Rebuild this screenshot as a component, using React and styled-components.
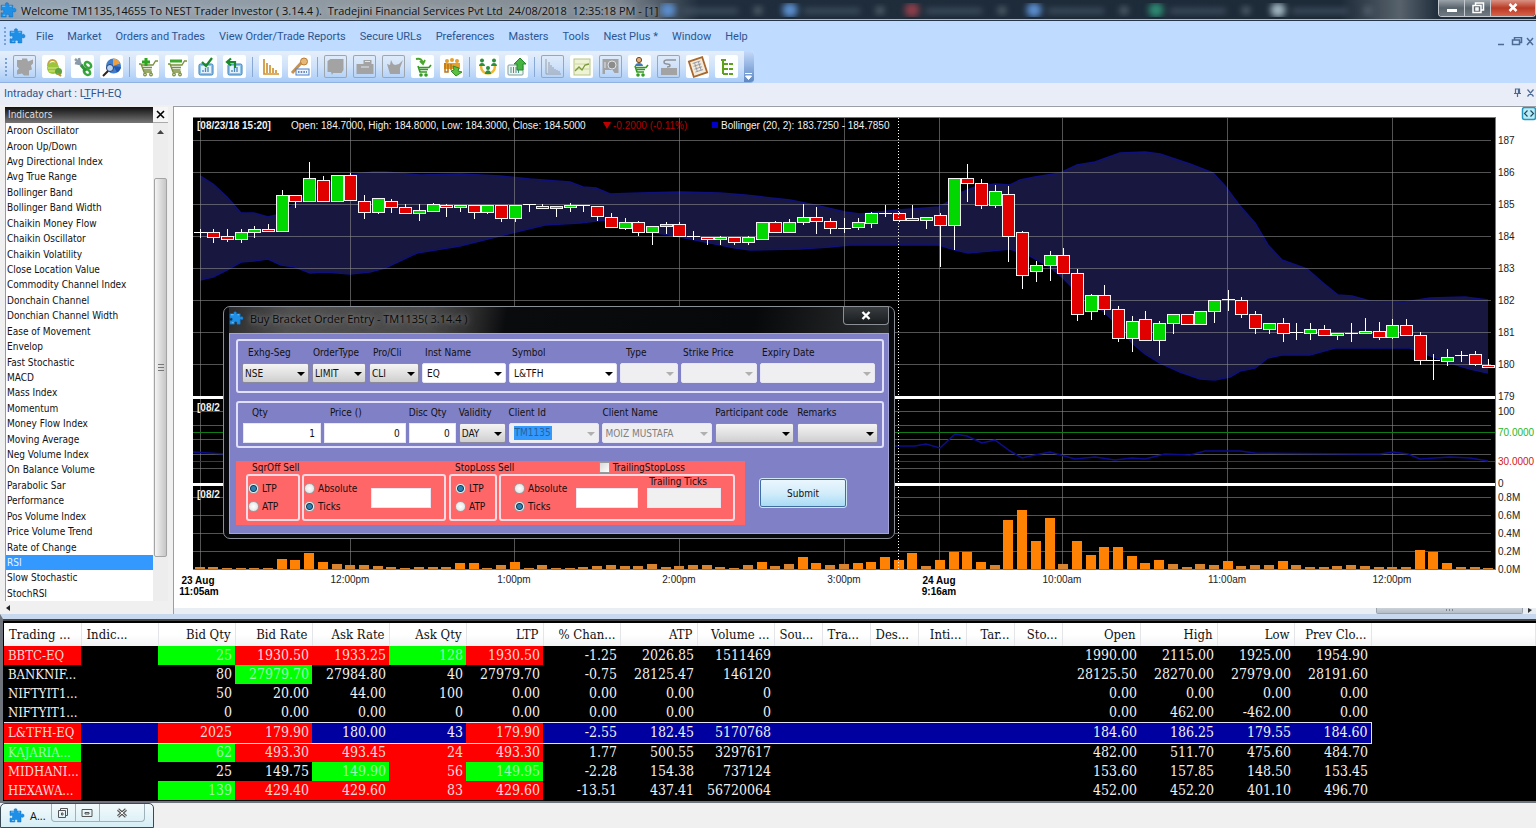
import React from "react";
import styled, { createGlobalStyle, css } from "styled-components";

const APP_TITLE =
  "Welcome TM1135,14655 To NEST Trader Investor ( 3.14.4 ).  Tradejini Financial Services Pvt Ltd  24/08/2018  12:35:18 PM - [1]";

const MENUS = [
  "File",
  "Market",
  "Orders and Trades",
  "View Order/Trade Reports",
  "Secure URLs",
  "Preferences",
  "Masters",
  "Tools",
  "Nest Plus *",
  "Window",
  "Help",
];

const INDICATORS = [
  "Aroon Oscillator",
  "Aroon Up/Down",
  "Avg Directional Index",
  "Avg True Range",
  "Bollinger Band",
  "Bollinger Band Width",
  "Chaikin Money Flow",
  "Chaikin Oscillator",
  "Chaikin Volatility",
  "Close Location Value",
  "Commodity Channel Index",
  "Donchain Channel",
  "Donchian Channel Width",
  "Ease of Movement",
  "Envelop",
  "Fast Stochastic",
  "MACD",
  "Mass Index",
  "Momentum",
  "Money Flow Index",
  "Moving Average",
  "Neg Volume Index",
  "On Balance Volume",
  "Parabolic Sar",
  "Performance",
  "Pos Volume Index",
  "Price Volume Trend",
  "Rate of Change",
  "RSI",
  "Slow Stochastic",
  "StochRSI",
];

// kind, body top, body bottom, wick top, wick bottom
const CANDLES = [
  ["d", 232, 233, 229, 237], ["r", 232, 237, 229, 242], ["r", 236, 239, 229, 241],
  ["g", 232, 239, 229, 242], ["g", 229, 232, 226, 237], ["r", 229, 231, 224, 231],
  ["g", 195, 231, 190, 231], ["r", 195, 201, 195, 207], ["g", 178, 201, 162, 201],
  ["r", 180, 201, 176, 201], ["g", 175, 201, 175, 201], ["r", 175, 200, 173, 200],
  ["r", 201, 212, 195, 218], ["g", 198, 212, 198, 213], ["r", 201, 207, 199, 212],
  ["r", 207, 213, 204, 213], ["g", 210, 213, 204, 220], ["g", 204, 211, 203, 211],
  ["r", 205, 207, 204, 216], ["g", 205, 207, 205, 211], ["r", 205, 212, 205, 218],
  ["g", 205, 212, 205, 213], ["r", 205, 218, 205, 221], ["g", 205, 218, 205, 221],
  ["d", 204, 205, 204, 211], ["r", 206, 208, 204, 208], ["g", 206, 208, 206, 216],
  ["g", 205, 207, 203, 211], ["d", 205, 206, 205, 211], ["r", 206, 216, 206, 220],
  ["r", 217, 227, 213, 227], ["g", 222, 228, 218, 229], ["r", 222, 232, 221, 235],
  ["g", 226, 232, 226, 244], ["g", 224, 226, 222, 233], ["r", 224, 236, 222, 236],
  ["d", 236, 237, 231, 239], ["r", 237, 239, 237, 244], ["g", 237, 239, 236, 244],
  ["r", 237, 242, 237, 244], ["g", 237, 242, 236, 244], ["g", 222, 239, 222, 239],
  ["r", 222, 232, 221, 232], ["g", 222, 232, 219, 232], ["g", 217, 222, 204, 224],
  ["r", 217, 221, 207, 233], ["r", 221, 228, 218, 233], ["d", 228, 230, 218, 232],
  ["g", 222, 227, 218, 229], ["g", 213, 223, 212, 227], ["d", 213, 214, 205, 216],
  ["r", 213, 220, 212, 221], ["r", 218, 220, 205, 220], ["g", 217, 220, 217, 228],
  ["r", 215, 225, 213, 266], ["g", 178, 225, 178, 249], ["r", 178, 183, 164, 201],
  ["r", 183, 205, 179, 208], ["g", 191, 205, 185, 207], ["r", 194, 236, 186, 261],
  ["r", 232, 275, 231, 288], ["g", 265, 271, 261, 281], ["g", 255, 265, 251, 280],
  ["r", 255, 273, 248, 273], ["r", 273, 314, 269, 320], ["g", 295, 311, 294, 319],
  ["r", 295, 309, 285, 314], ["r", 309, 338, 306, 341], ["g", 321, 338, 316, 351],
  ["r", 319, 340, 311, 340], ["g", 323, 340, 321, 355], ["g", 314, 323, 314, 333],
  ["r", 314, 324, 314, 324], ["g", 311, 324, 311, 324], ["g", 300, 311, 300, 322],
  ["d", 299, 300, 290, 310], ["r", 300, 314, 297, 317], ["r", 314, 328, 311, 333],
  ["g", 323, 329, 323, 333], ["r", 323, 333, 318, 341], ["d", 332, 333, 323, 339],
  ["g", 329, 333, 323, 339], ["r", 329, 335, 325, 335], ["g", 333, 335, 333, 339],
  ["d", 333, 334, 323, 341], ["g", 331, 333, 318, 333], ["r", 331, 337, 322, 339],
  ["g", 325, 337, 319, 338], ["r", 325, 335, 319, 335], ["r", 335, 360, 332, 364],
  ["d", 360, 361, 354, 379], ["g", 357, 361, 349, 365], ["d", 355, 356, 351, 361],
  ["r", 354, 364, 351, 365], ["r", 365, 367, 359, 367],
];

const VOLUMES = [
  2, 2, 1, 1, 1, 1, 10, 9, 16, 7, 5, 4, 4, 3, 2, 1, 2, 2, 2, 6, 6, 1, 4, 7, 1,
  4, 1, 1, 2, 3, 4, 3, 3, 5, 2, 3, 4, 4, 2, 1, 4, 7, 3, 5, 12, 6, 4, 5, 6, 7,
  12, 9, 16, 3, 9, 17, 17, 7, 4, 49, 59, 28, 51, 5, 28, 14, 22, 22, 13, 6, 9,
  5, 2, 5, 4, 8, 3, 4, 4, 8, 4, 2, 2, 3, 4, 3, 2, 2, 2, 19, 17, 6, 2, 2, 1,
];

const BAND_TOP =
  "200,176 213,184 227,197 241,213 254,213 268,217 281,214 300,200 325,184 350,175 373,172 385,172 420,175 460,174 500,176 530,179 570,182 583,187 596,188 610,194 640,193 680,192 720,193 745,195 790,200 815,205 845,212 860,214 898,210 939,207 950,201 960,193 975,187 995,184 1010,185 1020,180 1035,177 1060,173 1077,165 1095,162 1120,153 1145,152 1160,154 1190,164 1213,173 1225,186 1240,206 1255,223 1268,245 1282,260 1307,269 1322,282 1338,295 1352,296 1370,301 1405,302 1430,298 1465,297 1488,300";
const BAND_BOTTOM =
  "1488,373 1470,369 1450,363 1420,352 1410,348 1380,348 1335,348 1310,355 1282,355 1268,358 1255,368 1240,371 1230,377 1215,380 1200,379 1180,372 1160,363 1145,354 1132,343 1118,325 1104,312 1077,292 1060,275 1048,266 1030,256 1010,249 990,251 968,253 955,250 939,245 898,245 850,245 830,247 800,249 750,250 735,248 710,243 690,239 670,235 650,232 625,224 605,220 580,223 545,225 520,231 500,236 460,246 417,253 385,268 370,272 350,274 325,272 310,273 295,267 281,265 268,259 254,261 241,262 227,270 213,277 200,280";
const RSI_LINE =
  "193,452 225,454 260,440 320,436 400,446 500,450 620,455 700,456 800,448 898,446 915,446 926,444 940,448 955,434 967,436 982,443 995,440 1010,451 1022,458 1035,455 1050,452 1075,459 1095,457 1115,460 1132,458 1145,459 1165,454 1190,455 1205,451 1240,451 1255,453 1360,454 1380,454 1393,452 1408,454 1420,459 1450,457 1470,458 1488,461";

const HOURS = [
  [350, "12:00pm"],
  [514, "1:00pm"],
  [679, "2:00pm"],
  [844, "3:00pm"],
  [1062, "10:00am"],
  [1227, "11:00am"],
  [1392, "12:00pm"],
];
const SCALE = [
  [140, "187"], [172, "186"], [204, "185"], [236, "184"], [268, "183"],
  [300, "182"], [332, "181"], [364, "180"], [396, "179"], [411, "100"],
  [432, "70.0000", "#1fb81f"], [461, "30.0000", "#d01818"], [483, "0"],
  [497, "0.8M"], [515, "0.6M"], [533, "0.4M"], [551, "0.2M"], [569, "0.0M"],
];
const GRID_Y = [140, 172, 204, 236, 268, 300, 332, 364, 396, 411, 425, 439, 454, 468, 497, 515, 533, 551];

const COLUMNS = [
  ["Trading ...", 77], ["Indic...", 77], ["Bid Qty", 77], ["Bid Rate", 77],
  ["Ask Rate", 77], ["Ask Qty", 77], ["LTP", 77], ["% Chan...", 77],
  ["ATP", 77], ["Volume ...", 77], ["Sou...", 48], ["Tra...", 48],
  ["Des...", 48], ["Inti...", 48], ["Tar...", 48], ["Sto...", 48],
  ["Open", 78], ["High", 77], ["Low", 77], ["Prev Clo...", 77],
];

// tones: one letter for each of the first seven cells
const QUOTES = [
  { tones: "r.grrgr", cells: ["BBTC-EQ", "", "25", "1930.50", "1933.25", "128", "1930.50", "-1.25", "2026.85", "1511469", "1990.00", "2115.00", "1925.00", "1954.90"] },
  { tones: "...g...", cells: ["BANKNIF...", "", "80", "27979.70", "27984.80", "40", "27979.70", "-0.75", "28125.47", "146120", "28125.50", "28270.00", "27979.00", "28191.60"] },
  { tones: ".......", cells: ["NIFTYIT1...", "", "50", "20.00", "44.00", "100", "0.00", "0.00", "0.00", "0", "0.00", "0.00", "0.00", "0.00"] },
  { tones: ".......", cells: ["NIFTYIT1...", "", "0", "0.00", "0.00", "0", "0.00", "0.00", "0.00", "0", "0.00", "462.00", "-462.00", "0.00"] },
  { tones: "r.rr..r", selected: true, cells: ["L&TFH-EQ", "", "2025", "179.90", "180.00", "43", "179.90", "-2.55", "182.45", "5170768", "184.60", "186.25", "179.55", "184.60"] },
  { tones: "g.grrrr", cells: ["KAJARIA...", "", "62", "493.30", "493.45", "24", "493.30", "1.77", "500.55", "3297617", "482.00", "511.70", "475.60", "484.70"] },
  { tones: "r...grg", cells: ["MIDHANI...", "", "25", "149.75", "149.90", "56", "149.95", "-2.28", "154.38", "737124", "153.60", "157.85", "148.50", "153.45"] },
  { tones: "r.grrrr", cells: ["HEXAWA...", "", "139", "429.40", "429.60", "83", "429.60", "-13.51", "437.41", "56720064", "452.00", "452.20", "401.10", "496.70"] },
];

const Puzzle = ({ size = 16 }) => (
  <svg width={size} height={size} viewBox="0 0 16 16">
    <path
      fill="#1d8fe6"
      stroke="#0b6cc0"
      strokeWidth=".5"
      d="M1 3h4.2c.5-.6-.6-1 .1-1.8.6-.6 2-.6 2.500 0 .7.800-.3 1.200.1 1.800H12v3.300c.7.400 1.200-.8 2.200-.3 1.100.5 1.100 2.700 0 3.200-1 .5-1.500-.6-2.200-.2V14H8.500c-.5-.7.600-1.200-.1-2-.6-.6-1.900-.6-2.500 0-.7.800.4 1.300-.1 2H1v-3.800c.6-.6 1.200.5 2 0 .8-.6.800-2.200 0-2.700-.8-.5-1.400.5-2 .1z"
    />
    <path d="M2 4h3M3 12.500h2M9 4h2" stroke="#7cc6fb" />
  </svg>
);

const cart = (
  <g fill="none" stroke="#7a8f3a" strokeWidth="1.300">
    <path d="M2 8h2l3 8h8M4 9h12l2.500-4H21M5.500 11.500h9.500M6.500 14h8" />
    <circle cx="8" cy="18.500" r="1.300" />
    <circle cx="14" cy="18.500" r="1.300" />
  </g>
);
const greenCart = (
  <g fill="none" stroke="#2f9a1e" strokeWidth="1.600">
    <path d="M6 10l2 6h7M7 11.500h10l2-2.500M8 13.500h8" />
    <circle cx="9" cy="19" r="1" />
    <circle cx="14" cy="19" r="1" />
  </g>
);
const report = (
  <g>
    <rect x="4" y="8" width="14" height="11" rx="1.500" fill="#8fc6ee" stroke="#3b7db6" />
    <rect x="6" y="10" width="10" height="7" fill="#e4f3fd" />
    <path d="M8 16v-2M10.500 16v-4M13 16v-5" stroke="#4c86b8" strokeWidth="1.300" />
  </g>
);

const TOOLS = [
  { off: true, art: <path d="M3 4h5V2.500h5l1 3 5-2v4l-2 2 1 4-3 1v5h-5l-2-2-5 1v-4l2-2-2-2z" fill="#a3a3a3" /> },
  { art: <g><path d="M5 10c0-8 9-8 9 0" fill="none" stroke="#c8a040" strokeWidth="2" /><circle cx="10" cy="12" r="6" fill="#9cc53a" /><path d="M5 12h10M6 15h8" stroke="#d8e88c" /><circle cx="15.500" cy="15.500" r="3.500" fill="#5da43c" /><path d="M14 17l4 3" stroke="#b8902e" strokeWidth="2" /></g> },
  { art: <g fill="none"><path d="M3 3l6 5M3 7l5 1M7 2l1 6 3 2" stroke="#8a9aa8" strokeWidth="2.500" /><ellipse cx="16" cy="9" rx="3.500" ry="2.500" transform="rotate(40 16 9)" stroke="#35a83a" strokeWidth="2.500" /><ellipse cx="15" cy="16" rx="3.500" ry="2.500" transform="rotate(40 15 16)" stroke="#35a83a" strokeWidth="2.500" /><path d="M9 9l5 6" stroke="#2c9434" strokeWidth="3" /></g> },
  { art: <g><circle cx="12.500" cy="10" r="7.500" fill="#3f7fd0" /><path d="M12 10V2.500a7.500 7.500 0 0 1 7 5z" fill="#f0a03a" /><path d="M12.500 10l7.500 1a7.500 7.500 0 0 1-4 5.500z" fill="#2257ad" /><circle cx="9" cy="12" r="3.500" fill="#b9d4f3" stroke="#2b3d66" /><path d="M7 15l-5 5" stroke="#30211e" strokeWidth="2" /></g> },
  "sep",
  { art: <g>{cart}<path d="M9 2v8M5 6h8" stroke="#2da51f" strokeWidth="3" /></g> },
  { art: <g>{cart}<path d="M4 5h12" stroke="#3eaa2c" strokeWidth="3" /></g> },
  { art: <g>{report}<path d="M7 6l4 4 6-8" fill="none" stroke="#178a2c" strokeWidth="2.200" /></g> },
  { art: <g>{report}<path d="M11 12V6H4M7 2.500L3 6l4 3.500" fill="none" stroke="#178a2c" strokeWidth="2.200" /></g> },
  "sep",
  { art: <path d="M4 3v15h15M7 17V7M10 17v-8M13 17v-5M16 17v-3" fill="none" stroke="#cf9335" strokeWidth="1.700" /> },
  { art: <g><path d="M3 17L13 6" stroke="#c59252" strokeWidth="3" /><circle cx="15" cy="5.500" r="3.500" fill="#e6b878" stroke="#b97d37" /><rect x="7" y="13" width="13" height="6" fill="#edf4ff" stroke="#4b7fc4" /><path d="M9 16h9" stroke="#3360a6" strokeWidth="1.500" strokeDasharray="1.500 1.200" /></g> },
  "sep",
  { off: true, art: <path d="M2.500 5l3-2h13v11l-2 3H8l-1 2-1-3H2.500z" fill="#a3a3a3" /> },
  { off: true, art: <g><path d="M2.500 8h7V4h8v4h2v10h-17z" fill="#a3a3a3" /><path d="M11 5.500h5M7 11h8" stroke="#dfe6ef" /></g> },
  { off: true, art: <path d="M4 8l3 1 1-5 2 4 2 1 4-1 4-4-3 8v6H7z" fill="#a3a3a3" /> },
  { art: <g>{greenCart}<path d="M4 3c5-1 6 1 7 4M8 5l3 3 2-4" fill="none" stroke="#4aa52d" strokeWidth="1.800" /></g> },
  { art: <g><g fill="#e59f2c"><circle cx="6" cy="5" r="2" /><circle cx="11" cy="4" r="2" /><circle cx="16" cy="5" r="2" /><path d="M3 7h16v6H3z" /></g><path d="M4 7v9h3V8M10 8v6" stroke="#b87518" strokeWidth="1.500" fill="none" /><path d="M12 10l6 2-1 3 4 1-6 4-5-5 3-1z" fill="#5bbf3f" stroke="#318b26" /></g> },
  "sep",
  { art: <g><path d="M4 10c0 10 14 10 14 0" fill="none" stroke="#efb935" strokeWidth="2.500" /><g fill="#2b8f3c"><circle cx="5" cy="4.500" r="2" /><circle cx="17" cy="4.500" r="2" /><path d="M2 10c0-4 6-4 6 0zM14 10c0-4 6-4 6 0z" /><circle cx="11" cy="12" r="2" /><path d="M8 18c0-5 6-5 6 0z" /></g></g> },
  { art: <g><rect x="2" y="9" width="15" height="10" rx="1" fill="#eef5f0" stroke="#7d9aa0" /><path d="M5 11v6M7.500 11v6M10 11v6M12.500 11v6" stroke="#4f8f89" /><path d="M14 2l6 6h-3v6h-6V8H8z" fill="#46b441" stroke="#238a2a" /></g> },
  "sep",
  { off: true, art: <path d="M4 3v15h15M7 17V6M9 17V9M11 17v-6M13 17v-4M15 17v-3M17 17v-2" fill="none" stroke="#9a9fa6" /> },
  { art: <g><rect x="3" y="3" width="16" height="16" fill="#eef3d4" stroke="#b9c48a" /><path d="M4 8h14M4 13h14" stroke="#ccd6a4" /><path d="M4 15l4-4 3 3 3-5 4-1" fill="none" stroke="#7c9a3a" strokeWidth="1.300" /></g> },
  { off: true, art: <g><path d="M2.500 3h16v14h-4l-2-3H5v4H2.500z" fill="#a3a3a3" /><circle cx="12" cy="9" r="4" fill="#8c8c8c" stroke="#dde3ea" /><path d="M5 6v6" stroke="#dde3ea" /></g> },
  { art: <g>{greenCart}<circle cx="10" cy="4" r="2.600" fill="#e5b07c" stroke="#6b4a26" /><path d="M6 10c0-4 8-4 8 0z" fill="#3e79bf" /></g> },
  { off: true, art: <g><path d="M3 12h16v7H3z" fill="#a3a3a3" /><path d="M9 11c4 0 4-3 0-3S5 4 9 4h9" fill="none" stroke="#8f949b" strokeWidth="1.500" /></g> },
  { art: <g transform="rotate(-18 11 11)"><rect x="4" y="3" width="14" height="16" fill="#f6ead8" stroke="#a8672f" strokeWidth="1.800" /><path d="M7 6h8M7 9h8M7 12h8M7 15h8M9 6v9M13 6v9" stroke="#8b93a5" strokeWidth=".8" /></g> },
  { art: <path d="M7 3v15M7 8h5M7 13h5M7 18h5M5 4h5M13 8h4M13 13h4M13 18h4" fill="none" stroke="#5fa01c" strokeWidth="2" /> },
];

const Chart = () => (
  <ChartSvg viewBox="174 107 1362 501" role="img" aria-label="Intraday chart">
    <rect x="193" y="117" width="1302" height="452" fill="#000" />
    <polygon points={`${BAND_TOP} ${BAND_BOTTOM}`} fill="#17173f" />
    <g fill="none" stroke="#10107c" strokeWidth="1.500">
      <polyline points={BAND_TOP} />
      <polyline points={BAND_BOTTOM} />
    </g>
    <g stroke="#8a8a8a" strokeOpacity=".6" shapeRendering="crispEdges">
      {GRID_Y.map((y) => (
        <path key={y} d={`M193 ${y}.5H1491`} />
      ))}
      {[200, 939, ...HOURS.map(([x]) => x)].map((x) => (
        <path key={x} d={`M${x}.5 117V569`} />
      ))}
    </g>
    <g shapeRendering="crispEdges">
      <path d="M193 432.500H1495" stroke="#0f7a16" />
      <path d="M193 461.500H1495" stroke="#a01010" />
      <path d="M193 397.500H1495M193 484.500H1495" stroke="#fff" strokeWidth="3" />
      <path d="M193 117.500H1495.500V569.500H193" fill="none" stroke="#777" />
    </g>
    <polyline points={RSI_LINE} fill="none" stroke="#0d0d8c" strokeWidth="1.500" />
    {VOLUMES.map((v, i) => (
      <rect
        key={i}
        x={Math.round(199.5 + i * 13.71) - 5}
        y={569 - v}
        width="10"
        height={v}
        fill={v > 5 ? "#ff8205" : "#d8832f"}
      />
    ))}
    <g shapeRendering="crispEdges">
      {CANDLES.map(([kind, top, bottom, high, low], i) => {
        const x = Math.round(199.5 + i * 13.71);
        return (
          <g key={i}>
            <path d={`M${x + 0.5} ${high}V${low + 1}`} stroke="#fff" />
            {kind === "d" ? (
              <path d={`M${x - 6} ${top + 0.5}h13`} stroke="#fff" />
            ) : (
              <rect
                x={x - 6 + 0.5}
                y={top + 0.5}
                width="12"
                height={bottom - top}
                fill={kind === "g" ? "#00d800" : "#e00000"}
                stroke="#f4f4f4"
              />
            )}
          </g>
        );
      })}
    </g>
    <path d="M898.500 118V569" stroke="#fff" strokeDasharray="1 2" />
    <ChartText x="197" y="129" $bold $light>[08/23/18 15:20]</ChartText>
    <ChartText x="291" y="129" $light>
      Open: 184.7000, High: 184.8000, Low: 184.3000, Close: 184.5000
    </ChartText>
    <path d="M603 122h8l-4 7z" fill="#c00000" />
    <ChartText x="613" y="129" fill="#b00000">-0.2000 (-0.11%)</ChartText>
    <rect x="712" y="122" width="6" height="6" fill="#0000c8" />
    <ChartText x="721" y="129" $light>Bollinger (20, 2): 183.7250 - 184.7850</ChartText>
    <ChartText x="197" y="411" $bold $light>[08/2</ChartText>
    <ChartText x="197" y="498" $bold $light>[08/2</ChartText>
    {SCALE.map(([y, label, color]) => (
      <ChartText key={label} x="1498" y={y + 4} fill={color || "#222"}>{label}</ChartText>
    ))}
    {HOURS.map(([x, label]) => (
      <ChartText key={x} x={x} y="583" textAnchor="middle" fill="#222">{label}</ChartText>
    ))}
    <ChartText x="198" y="584" $bold textAnchor="middle">23 Aug</ChartText>
    <ChartText x="199" y="595" $bold textAnchor="middle">11:05am</ChartText>
    <ChartText x="939" y="584" $bold textAnchor="middle">24 Aug</ChartText>
    <ChartText x="939" y="595" $bold textAnchor="middle">9:16am</ChartText>
    <rect x="1522.500" y="107.500" width="13" height="12" rx="2" fill="#b9ecf9" stroke="#2596be" strokeWidth="1.500" />
    <path d="M1527.500 110.500l-3 3 3 3M1530.500 110.500l3 3-3 3" fill="none" stroke="#224a5e" strokeWidth="1.200" />
  </ChartSvg>
);

const Combo = ({ id, label, value = "", width, indent = 0, tone, marked }) => (
  <Field $width={width}>
    <FieldLabel htmlFor={id} $indent={indent}>{label}</FieldLabel>
    <SelectBox $tone={tone}>
      <select id={id} defaultValue={value} disabled={tone === "off"}>
        <option>{value}</option>
      </select>
      {marked && <Marked>{marked}</Marked>}
    </SelectBox>
  </Field>
);

const NumberField = ({ id, label, value, width, indent = 0 }) => (
  <Field $width={width}>
    <FieldLabel htmlFor={id} $indent={indent}>{label}</FieldLabel>
    <TextInput id={id} defaultValue={value} />
  </Field>
);

const RadioPair = ({ name, first, second, checked }) => (
  <RadioColumn>
    {[first, second].map((text) => (
      <label key={text}>
        <input type="radio" name={name} defaultChecked={text === checked} />
        {text}
      </label>
    ))}
  </RadioColumn>
);

const OrderDialog = () => (
  <Dialog role="dialog" aria-label="Buy Bracket Order Entry">
    <DialogTitle>
      <Puzzle size={15} />
      <h2>Buy Bracket Order Entry - TM1135( 3.14.4 )</h2>
      <DialogClose aria-label="Close">
        <svg width="10" height="9" viewBox="0 0 10 9">
          <path d="M1.500 1l7 7M8.500 1l-7 7" stroke="#fff" strokeWidth="2.400" />
        </svg>
      </DialogClose>
    </DialogTitle>
    <DialogBody>
      <Group $tall>
        <Combo id="seg" label="Exhg-Seg" value="NSE" width={67} indent={6} />
        <Combo id="type" label="OrderType" value="LIMIT" width={54} indent={1} />
        <Combo id="pro" label="Pro/Cli" value="CLI" width={50} indent={4} />
        <Combo id="inst" label="Inst Name" value="EQ" width={84} indent={3} tone="white" />
        <Combo id="symbol" label="Symbol" value="L&TFH" width={108} indent={3} tone="white" />
        <Combo id="opt" label="Type" width={58} indent={6} tone="off" />
        <Combo id="strike" label="Strike Price" width={76} indent={2} tone="off" />
        <Combo id="expiry" label="Expiry Date" width={115} indent={2} tone="off" />
      </Group>
      <Group>
        <NumberField id="qty" label="Qty" value="1" width={78} indent={9} />
        <NumberField id="price" label="Price ()" value="0" width={82} indent={6} />
        <NumberField id="disc" label="Disc Qty" value="0" width={47} />
        <Combo id="validity" label="Validity" value="DAY" width={47} />
        <Combo id="client" label="Client Id" width={91} tone="off" marked="TM1135" />
        <Combo id="name" label="Client Name" value="MOIZ MUSTAFA" width={110} tone="off" />
        <Combo id="part" label="Participant code" width={79} />
        <Combo id="remarks" label="Remarks" width={81} />
      </Group>
      <BottomRow>
        <SellPanel>
          <Leg>
            <Legend>SqrOff Sell</Legend>
            <Boxes>
              <Box $width={54}>
                <RadioPair name="sq-base" first="LTP" second="ATP" checked="LTP" />
              </Box>
              <Box $width={144}>
                <RadioPair name="sq-unit" first="Absolute" second="Ticks" checked="Ticks" />
                <TextInput aria-label="SqrOff value" $width={60} $push />
              </Box>
            </Boxes>
          </Leg>
          <Leg>
            <Legend>
              StopLoss Sell
              <label>
                <input type="checkbox" />
                TrailingStopLoss
              </label>
            </Legend>
            <Boxes>
              <Box $width={48} $left={4}>
                <RadioPair name="sl-base" first="LTP" second="ATP" checked="LTP" />
              </Box>
              <Box $width={236} $left={13}>
                <RadioPair name="sl-unit" first="Absolute" second="Ticks" checked="Ticks" />
                <TextInput aria-label="StopLoss value" $width={62} />
                <Ticks>
                  <label htmlFor="ticks">Trailing Ticks</label>
                  <TextInput id="ticks" disabled $width={74} />
                </Ticks>
              </Box>
            </Boxes>
          </Leg>
        </SellPanel>
        <Submit>Submit</Submit>
      </BottomRow>
    </DialogBody>
  </Dialog>
);

const QuoteTable = () => (
  <Quotes>
    <table>
      <colgroup>
        {COLUMNS.map(([name, width]) => (
          <Col key={name} $width={width} />
        ))}
        <col />
      </colgroup>
      <thead>
        <tr>
          {COLUMNS.map(([name], i) => (
            <HeadCell key={name} $left={i < 2 || (i > 9 && i < 13)}>{name}</HeadCell>
          ))}
          <HeadCell />
        </tr>
      </thead>
      <tbody>
        {QUOTES.map(({ tones, cells, selected }, r) => (
          <QuoteRow key={r} $selected={selected}>
            {cells.slice(0, 10).map((text, i) => (
              <Cell key={i} $tone={tones[i]} $left={i === 0}>{text}</Cell>
            ))}
            <Cell colSpan={6} />
            {cells.slice(10).map((text, i) => (
              <Cell key={i}>{text}</Cell>
            ))}
            <Filler />
          </QuoteRow>
        ))}
      </tbody>
    </table>
  </Quotes>
);

const App = () => (
  <Shell>
    <GlobalStyle />
    <TitleBar>
      <Puzzle size={17} />
      <h1>{APP_TITLE}</h1>
      <Tabs>
        {["#5b8fd0", "#5b8fd0", "#8d3f4a", "#5b8fd0", "#2d8a72", "#9fb4bf"].map((color, i) => (
          <Tab key={i} $color={color} />
        ))}
      </Tabs>
      <WindowButtons>
        <button aria-label="Minimize">
          <svg width="14" height="12"><path d="M2 8.500h10" stroke="#fff" strokeWidth="3" /></svg>
        </button>
        <button aria-label="Restore">
          <svg width="14" height="12" fill="none" stroke="#fff" strokeWidth="1.500">
            <path d="M4.500 3V1h8v7h-2M2 3.500h8v7H2zM5 6h2v2H5z" />
          </svg>
        </button>
        <button aria-label="Close">
          <svg width="14" height="12"><path d="M3.500 2l7 7M10.500 2l-7 7" stroke="#fff" strokeWidth="2.500" /></svg>
        </button>
      </WindowButtons>
    </TitleBar>
    <MenuBar>
      <Grip />
      <Puzzle size={17} />
      {MENUS.map((name) => (
        <button key={name}>{name}</button>
      ))}
      <ChildControls>
        <svg width="38" height="10" fill="none" stroke="#4d6a94" strokeWidth="1.500">
          <path d="M0 7.500h6M16.500 2.500v-2h7v5h-2M14.500 3h7v4.500h-7zM29 1l6 7M35 1l-6 7" />
        </svg>
      </ChildControls>
    </MenuBar>
    <ToolRow>
      <Toolbar>
        <Grip />
        {TOOLS.map((tool, i) =>
          tool === "sep" ? (
            <Separator key={i} />
          ) : (
            <ToolButton key={i} $off={tool.off} aria-label={`Tool ${i + 1}`}>
              <svg width="22" height="22" viewBox="0 0 22 22">{tool.art}</svg>
            </ToolButton>
          )
        )}
        <Overflow>
          <svg width="9" height="9"><path d="M1 1.500h7M1.500 4h6l-3 3.500z" fill="#fff" stroke="#fff" /></svg>
        </Overflow>
      </Toolbar>
    </ToolRow>
    <PanelTitle>
      <span>Intraday chart : L<u>T</u>FH-EQ</span>
      <svg width="22" height="10" fill="none" stroke="#4d6a94" strokeWidth="1.200">
        <path d="M2.500 1h4v4.500h-4zM1 5.500h7M4.500 6v3M5.500 1v4M14.500 1.500l6 7M20.500 1.500l-6 7" />
      </svg>
    </PanelTitle>
    <Body>
      <Sidebar>
        <SideHead>
          <span>Indicators</span>
          <button aria-label="Close indicators">
            <svg width="9" height="9"><path d="M1 1l7 7M8 1L1 8" stroke="#000" strokeWidth="1.600" /></svg>
          </button>
        </SideHead>
        <SideMain>
          <ul>
            {INDICATORS.map((name) => (
              <Indicator key={name} $active={name === "RSI"}>{name}</Indicator>
            ))}
          </ul>
          <Scroller>
            <svg width="7" height="4"><path d="M0 4l3.500-4L7 4z" fill="#444" /></svg>
            <Thumb />
          </Scroller>
        </SideMain>
        <SideFoot>
          <svg width="4" height="6"><path d="M4 0v6L0 3z" fill="#222" /></svg>
        </SideFoot>
      </Sidebar>
      <ChartPanel>
        <Chart />
        <ChartFoot>
          <HThumb />
          <svg width="4" height="5"><path d="M0 0v5l4-3z" fill="#333" /></svg>
        </ChartFoot>
      </ChartPanel>
      <OrderDialog />
    </Body>
    <QuoteTable />
    <Status>
      <MiniWindow>
        <Puzzle size={16} />
        <span>A...</span>
        <MiniButtons>
          <button aria-label="Restore">
            <svg width="12" height="12" fill="none" stroke="#555"><path d="M3.500 3V1.500h7v7H9M1.500 3.500h7v7h-7zM4.500 6h1.500v2H4.500z" /></svg>
          </button>
          <button aria-label="Maximize">
            <svg width="12" height="10" fill="none" stroke="#555"><path d="M1 1.500h10v7H1zM4 4.500h4v1.500H4z" /></svg>
          </button>
          <button aria-label="Close">
            <svg width="12" height="10"><path d="M2 1.500l8 7M10 1.500l-8 7" stroke="#555" strokeWidth="3" /><path d="M2 1.500l8 7M10 1.500l-8 7" stroke="#fff" /></svg>
          </button>
        </MiniButtons>
      </MiniWindow>
    </Status>
  </Shell>
);

const GlobalStyle = createGlobalStyle`
  * {
    box-sizing: border-box;
  }

  body {
    margin: 0;
    background: #f0f0f0;
    font-family: "DejaVu Sans Condensed", "DejaVu Sans", sans-serif;
    font-size: 10px;
    color: #111;
  }

  button, input, select {
    margin: 0;
    padding: 0;
    border: 0;
    font: inherit;
    color: inherit;
    background: none;
  }

  svg {
    flex: none;
    display: block;
  }
`;

const uiFont = css`
  font-family: "Open Sans", "Noto Sans", sans-serif;
`;

const menuFont = css`
  font-family: Roboto, "Open Sans", sans-serif;
  font-size: 11px;
`;

const Shell = styled.div`
  display: flex;
  flex-direction: column;
  min-height: 100vh;
  overflow: hidden;
`;

const TitleBar = styled.header`
  display: flex;
  align-items: center;
  height: 21px;
  border-bottom: 1px solid #26364a;
  box-shadow: inset 0 -1px 0 #a9b7c6;
  background: linear-gradient(90deg, #93a4b4 0, #8f979d 400px, #7d8790 620px, #1f2d3c 700px, #1d2a38 1340px, #57626c 1400px, #1d2a38 1440px);

  h1 {
    ${uiFont}
    margin: 0 0 0 4px;
    font-size: 11px;
    font-weight: 400;
    white-space: pre;
    text-shadow: 0 0 6px #d5dbe0;
  }
`;

const Tabs = styled.div`
  flex: 1;
  display: flex;
  margin-left: 2px;
  overflow: hidden;
`;

const Tab = styled.div`
  flex: 0 0 122px;
  height: 14px;
  filter: blur(3px);
  background:
    radial-gradient(circle at 8px 7px, ${({ $color }) => $color} 7px, transparent 8px),
    linear-gradient(#4a5a6a, #4a5a6a) 22px 6px / 56px 4px no-repeat,
    linear-gradient(#56636f, #56636f) 94px 4px / 8px 7px no-repeat;
`;

const WindowButtons = styled.div`
  display: flex;
  align-self: flex-start;
  width: 98px;
  height: 17px;
  border: 1px solid #c3c9cf;
  border-top: 0;
  border-radius: 0 0 4px 4px;
  overflow: hidden;

  button {
    flex: 1;
    display: grid;
    place-items: center;
    border-right: 1px solid #c3c9cf;
    background: linear-gradient(#9ba3aa, #59636c 50%, #6f7a83);
  }
  button:last-child {
    flex: 0 0 44px;
    border: 0;
    background: linear-gradient(#d99183, #b93a24 50%, #d8624a);
  }
`;

const MenuBar = styled.nav`
  ${menuFont}
  display: flex;
  align-items: center;
  height: 30px;
  padding-left: 4px;
  background: #bfdbff;
  color: #2c5591;

  > svg {
    margin-right: 10px;
  }
  > button {
    margin-right: 14px;
    white-space: nowrap;
  }
`;

const Grip = styled.i`
  width: 2px;
  height: 18px;
  margin-right: 3px;
  background: repeating-linear-gradient(#7ba0d4 0 2px, transparent 2px 4px);
`;

const ChildControls = styled.div`
  margin: 12px 0 0 auto;
`;

const ToolRow = styled.div`
  background: #bfdbff;
`;

const Toolbar = styled.div`
  display: flex;
  align-items: center;
  width: max-content;
  height: 32px;
  padding-left: 5px;
  border-bottom: 1px solid #8fb2e0;
  border-radius: 0 4px 4px 0;
  overflow: hidden;
  background: linear-gradient(#e6effb, #cfe2fa 50%, #a9ccf8);
`;

const ToolButton = styled.button`
  display: grid;
  place-items: center;
  width: 23px;
  height: 23px;
  margin: 0 3px;
  border-radius: 2px;
  background: ${({ $off }) => ($off ? "transparent" : "#fdfefe")};
  box-shadow: ${({ $off }) => ($off ? "inset 0 0 0 1px #9da5ae" : "none")};
`;

const Separator = styled.i`
  width: 1px;
  height: 20px;
  margin: 0 3px;
  background: #88a9d6;
`;

const Overflow = styled.div`
  display: flex;
  align-items: flex-end;
  align-self: stretch;
  width: 10px;
  margin-left: 3px;
  padding-bottom: 1px;
  background: linear-gradient(#c4dafa, #5d88c4);
`;

const PanelTitle = styled.div`
  ${menuFont}
  display: flex;
  align-items: center;
  justify-content: space-between;
  height: 22px;
  padding: 0 1px 2px 4px;
  background: #e9edf7;
  color: #2c5591;
`;

const Body = styled.main`
  position: relative;
  display: flex;
  align-items: stretch;
  background: #f0f0f0;
`;

const Sidebar = styled.aside`
  flex: 0 0 173px;
  display: flex;
  flex-direction: column;
  padding: 2px 4px 0 5px;
`;

const SideHead = styled.div`
  display: flex;
  height: 16px;
  line-height: 15px;
  color: #ddd;

  span {
    width: 148px;
    padding-left: 3px;
    background: linear-gradient(#111, #777);
  }
  button {
    display: grid;
    place-items: center;
    width: 15px;
    border-bottom: 1px solid #aaa;
    background: #f6f6f6;
  }
`;

const SideMain = styled.div`
  flex: 1;
  display: flex;

  ul {
    display: flex;
    flex-direction: column;
    width: 148px;
    margin: 0;
    padding: 0;
    list-style: none;
    border-left: 1px solid #999;
    background: #fff;
  }
`;

const Indicator = styled.li`
  flex: 1;
  display: flex;
  align-items: center;
  padding-left: 1px;
  white-space: nowrap;
  color: ${({ $active }) => ($active ? "#e8f4ff" : "#111")};
  background: ${({ $active }) => ($active ? "#3399ff" : "transparent")};
`;

const Scroller = styled.div`
  display: flex;
  flex-direction: column;
  align-items: center;
  width: 15px;
  padding: 7px 1px 44px;
  background: #ededed;
`;

const Thumb = styled.div`
  flex: 1;
  width: 13px;
  margin-top: 44px;
  border: 1px solid #a4a4a4;
  border-radius: 2px;
  background:
    repeating-linear-gradient(#777 0 1px, transparent 1px 3px) center / 6px 7px no-repeat,
    linear-gradient(90deg, #f4f4f4, #dcdcdc 50%, #c6c6c6);
`;

const SideFoot = styled.div`
  height: 13px;
  padding: 4px 0 0 1px;
`;

const ChartPanel = styled.section`
  flex: 1;
  min-width: 0;
  margin-top: 1px;
  border: solid #9a9fa6;
  border-width: 1px 0 0 1px;
  background: #fff;
`;

const ChartSvg = styled.svg`
  width: 100%;
  height: auto;
`;

const ChartText = styled.text`
  font-family: "Liberation Sans", Arial, sans-serif;
  font-size: 10px;
  font-weight: ${({ $bold }) => ($bold ? 700 : 400)};
  ${({ $light }) => $light && "fill: #f2f2f2;"}
`;

const ChartFoot = styled.div`
  display: flex;
  justify-content: flex-end;
  gap: 5px;
  height: 6px;
  padding-right: 4px;
  background: #e9edf4;
`;

const HThumb = styled.div`
  width: 147px;
  border: 1px solid #9aa3ad;
  border-top: 0;
  border-radius: 0 0 2px 2px;
  background:
    repeating-linear-gradient(90deg, #7d868f 0 1px, transparent 1px 3px) center 1px / 7px 2px no-repeat,
    linear-gradient(#ccd2d9, #b4bcc6);
`;

const Dialog = styled.section`
  position: absolute;
  top: 201px;
  left: 223px;
  width: 672px;
  padding: 0 5px 4px;
  border: 1px solid #8b9096;
  border-radius: 7px;
  background: #07090c;
`;

const DialogTitle = styled.div`
  display: flex;
  align-items: center;
  height: 26px;
  padding-bottom: 4px;
  background: linear-gradient(100deg, #2c2c2c 0, #515151 60px, #4a4a4a 200px, #333 236px, #0a0b0d 275px, #07080a 520px, #2c2f31);

  h2 {
    ${uiFont}
    margin: 0 auto 0 6px;
    font-size: 11px;
    font-weight: 400;
    color: #080808;
    text-shadow: 0 0 4px #8d8d8d, 0 0 8px #777;
    white-space: nowrap;
  }
`;

const DialogClose = styled.button`
  align-self: flex-start;
  display: grid;
  place-items: center;
  width: 46px;
  height: 18px;
  border: 1px solid #8b9096;
  border-top: 0;
  border-radius: 0 0 4px 4px;
  background: linear-gradient(#3a3d40, #191b1d);
`;

const DialogBody = styled.div`
  display: flex;
  flex-direction: column;
  gap: 8px;
  padding: 5px 4px 8px 6px;
  border: 1px solid #a4a4d8;
  background: #8080c6;
`;

const Group = styled.div`
  display: flex;
  align-items: flex-end;
  gap: 3px;
  height: ${({ $tall }) => ($tall ? 54 : 47)}px;
  padding: ${({ $tall }) => ($tall ? "0 4px 8px 4px" : "0 4px 3px 5px")};
  border: 2px solid #e0e0fa;
  border-radius: 3px;
`;

const Field = styled.div`
  display: flex;
  flex-direction: column;
  width: ${({ $width }) => $width}px;
`;

const FieldLabel = styled.label`
  height: 17px;
  padding-left: ${({ $indent }) => $indent}px;
  line-height: 13px;
  white-space: nowrap;
`;

const SelectBox = styled.div`
  position: relative;
  display: flex;
  height: 20px;
  border: 1px solid ${({ $tone }) => ($tone ? "#e6e6f4" : "#8a8a9c")};
  border-radius: 2px;
  background: ${({ $tone }) =>
    $tone === "white" ? "#fff" : $tone === "off" ? "#efeff2" : "linear-gradient(#f4f4f4, #e2e2e2 50%, #cfcfcf)"};

  select {
    flex: 1;
    min-width: 0;
    padding-left: ${({ $tone }) => ($tone === "white" ? 4 : 2)}px;
    appearance: none;
    opacity: 1;
    color: ${({ $tone }) => ($tone === "off" ? "#808080" : "#111")};
  }

  &::after {
    content: "";
    position: absolute;
    top: 8px;
    right: 3px;
    border: solid transparent;
    border-width: 4px 4px 0;
    border-top-color: ${({ $tone }) => ($tone === "off" ? "#b0b0b0" : "#000")};
    pointer-events: none;
  }
`;

const Marked = styled.span`
  position: absolute;
  top: 2px;
  left: 4px;
  padding: 0 1px;
  line-height: 14px;
  color: #28629c;
  background: #3399ff;
`;

const TextInput = styled.input`
  width: ${({ $width }) => ($width ? `${$width}px` : "100%")};
  height: 20px;
  margin-left: ${({ $push }) => ($push ? "auto" : 0)};
  padding-right: 5px;
  border: 1px solid #e6e6f4;
  text-align: right;
  background: ${({ disabled }) => (disabled ? "#f0f0f0" : "#fff")};
`;

const BottomRow = styled.div`
  display: flex;
  align-items: center;
  gap: 15px;
  margin-top: 5px;
`;

const SellPanel = styled.div`
  display: flex;
  gap: 3px;
  padding: 0 10px 4px;
  background: #ff6668;
`;

const Leg = styled.div`
  display: flex;
  flex-direction: column;
`;

const Legend = styled.div`
  display: flex;
  height: 13px;
  padding-left: 6px;
  line-height: 13px;
  white-space: nowrap;

  label {
    display: flex;
    align-items: center;
    gap: 3px;
    margin: 0 50px 0 auto;
  }
  input {
    appearance: none;
    width: 11px;
    height: 11px;
    border: 1px solid #999;
    background: linear-gradient(135deg, #d8d8d8, #fff);
  }
`;

const Boxes = styled.div`
  display: flex;
  gap: 2px;
`;

const Box = styled.div`
  display: flex;
  align-items: center;
  gap: 9px;
  width: ${({ $width }) => $width}px;
  height: 47px;
  padding: 0 13px 0 ${({ $left = 0 }) => $left}px;
  border: 2px solid #f9dbe6;
  border-radius: 3px;
`;

const RadioColumn = styled.div`
  display: flex;
  flex-direction: column;
  gap: 6px;

  label {
    display: flex;
    align-items: center;
    gap: 3px;
    height: 12px;
  }
  input {
    appearance: none;
    width: 11px;
    height: 11px;
    border: 1px solid #9d9d9d;
    border-radius: 50%;
    background: radial-gradient(#fff, #ddd);
  }
  input:checked {
    background: radial-gradient(#2b7fb0 0 2px, #123b58 3px, #eee 4px);
  }
`;

const Ticks = styled.div`
  display: flex;
  flex-direction: column;
  align-self: flex-start;

  label {
    height: 12px;
    padding-left: 2px;
    line-height: 12px;
  }
`;

const Submit = styled.button`
  width: 86px;
  height: 28px;
  border: 1px solid #3f6f9f;
  border-radius: 2px;
  outline: 1px solid #cfe6f5;
  background: linear-gradient(#eaf6fd, #d3edfb 50%, #a9dbf5);
`;

const Quotes = styled.div`
  border: solid #6f737b;
  border-width: 3px 0 2px 3px;
  border-top: 5px solid #c8d8ee;
  box-shadow: inset 0 2px 0 #444;
  padding: 4px 0 1px 1px;
  background: #000;

  table {
    width: 100%;
    table-layout: fixed;
    border-collapse: collapse;
    font-family: "DejaVu Serif Condensed", "DejaVu Serif", serif;
    font-size: 14px;
  }
`;

const Col = styled.col`
  width: ${({ $width }) => $width}px;
`;

const HeadCell = styled.th`
  height: 23px;
  padding: 0 4px 0 5px;
  overflow: hidden;
  border-right: 1px solid #e3e5e8;
  font-size: 13px;
  font-weight: 400;
  text-align: ${({ $left }) => ($left ? "left" : "right")};
  white-space: nowrap;
  background: linear-gradient(#fff 50%, #f1f2f4);
`;

const TONES = { r: "#ff0000", g: "#00ff00" };

const Cell = styled.td`
  height: 19px;
  padding: 0 ${({ $left }) => ($left ? 0 : 3)}px 0 4px;
  overflow: hidden;
  font-size: ${({ $left }) => ($left ? 13 : 14)}px;
  line-height: 17px;
  text-align: ${({ $left }) => ($left ? "left" : "right")};
  white-space: nowrap;
  color: ${({ $tone }) => ($tone === "g" ? "#9dffb0" : $tone === "r" ? "#ffd9d9" : "#f2f2f2")};
  background: ${({ $tone }) => TONES[$tone] || "transparent"};
`;

const Filler = styled.td`
  background: #000;
`;

const QuoteRow = styled.tr`
  ${({ $selected }) =>
    $selected &&
    css`
      background: #0000a0;

      ${Cell} {
        height: 21px;
        border: solid #e4e4f4;
        border-width: 1px 0;
      }
      ${Cell}:nth-last-child(2) {
        border-right-width: 1px;
      }
    `}
`;

const Status = styled.footer`
  flex: 1;
  background: #f0f0f0;
`;

const MiniWindow = styled.div`
  ${uiFont}
  display: flex;
  align-items: center;
  gap: 5px;
  width: 154px;
  height: 25px;
  padding-left: 8px;
  border: 1px solid #3a4a55;
  border-radius: 5px 5px 0 0;
  background: linear-gradient(#f2fafc, #d6eef6);
  font-size: 11px;
`;

const MiniButtons = styled.div`
  align-self: flex-start;
  display: flex;
  flex: 1;
  height: 18px;
  margin-right: 8px;
  border: 1px solid #9fb2ba;
  border-top: 0;
  border-radius: 0 0 4px 4px;

  button {
    flex: 1;
    display: grid;
    place-items: center;
    border-right: 1px solid #9fb2ba;
  }
  button:last-child {
    flex: 0 0 44px;
    border: 0;
  }
`;

export default App;
